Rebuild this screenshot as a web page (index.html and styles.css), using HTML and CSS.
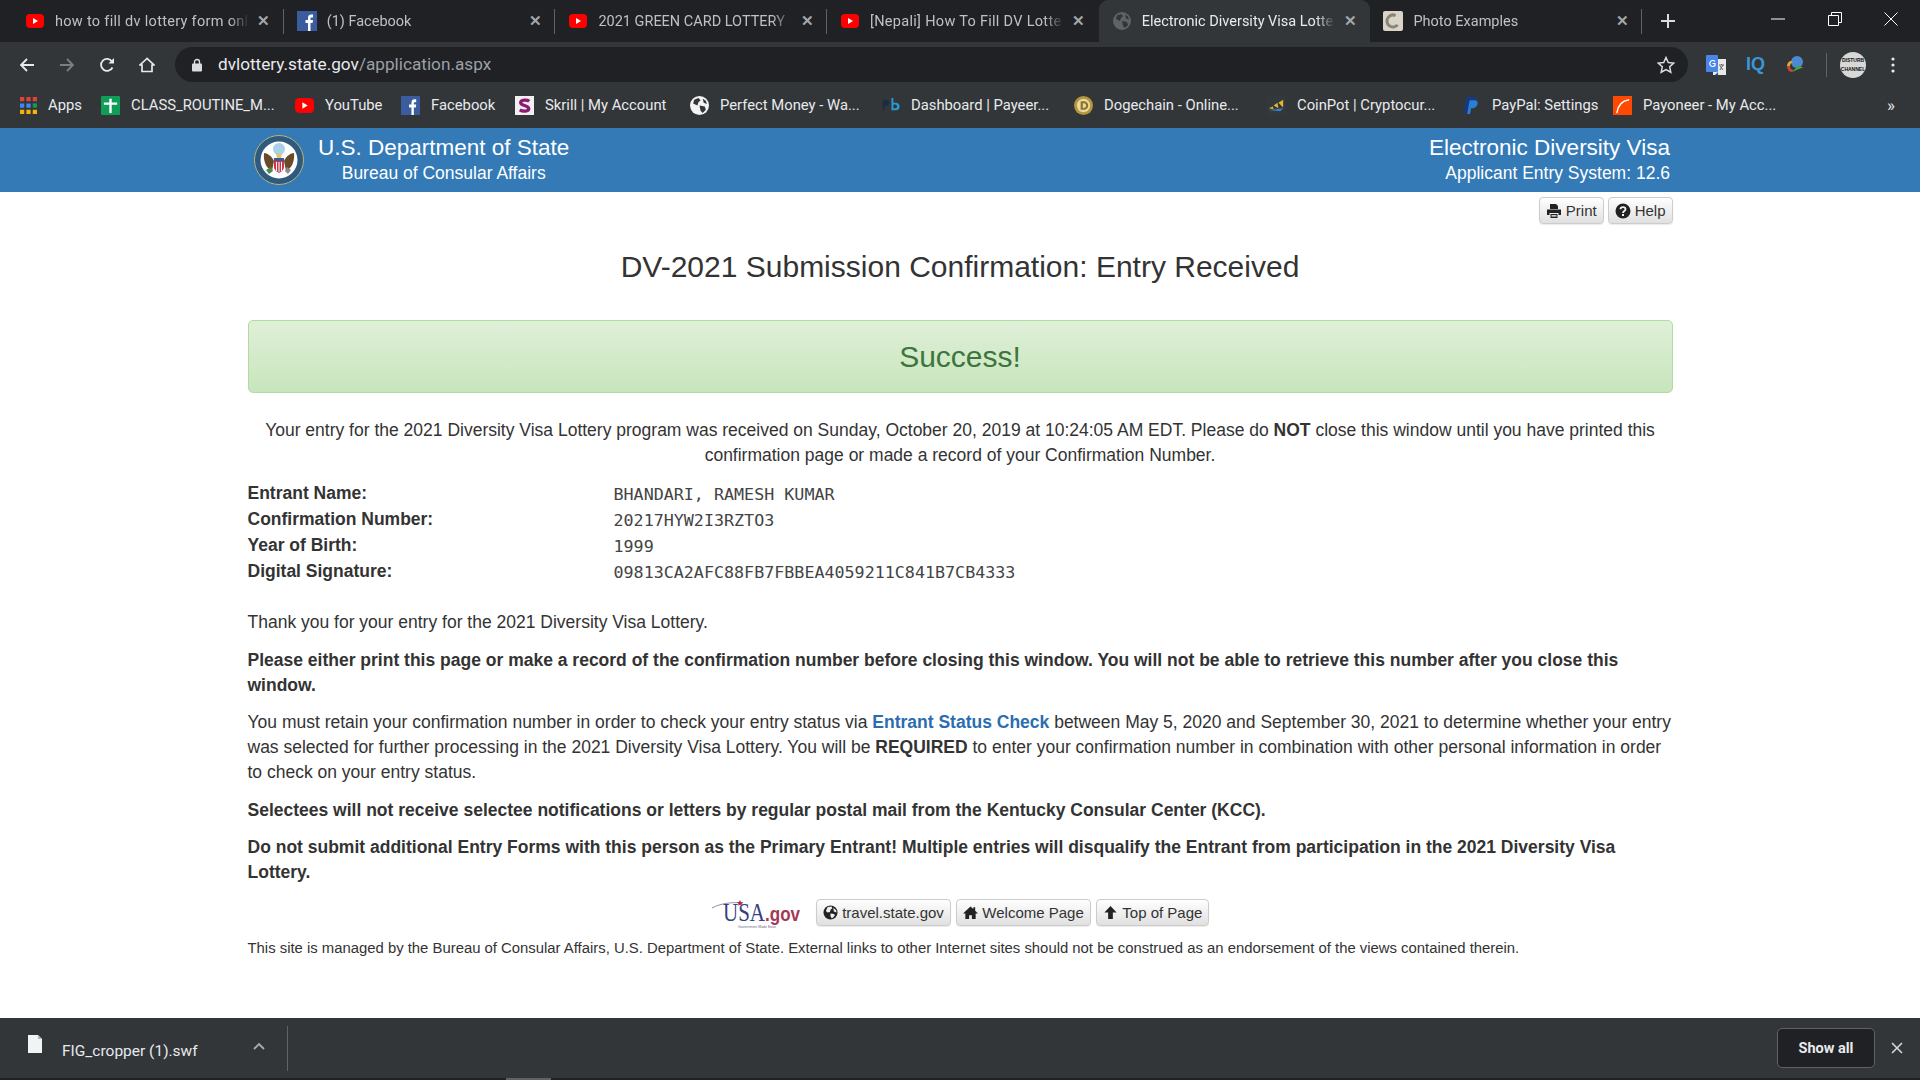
FILE: index.html
```html
<!DOCTYPE html>
<html lang="en">
<head>
    <meta charset="UTF-8">
    <meta name="viewport" content="width=device-width, initial-scale=1.0">
    <title>Electronic Diversity Visa Lottery</title>
    <link rel="stylesheet" href="styles.css">
</head>
<body>
    <svg class="sprites" width="0" height="0">
        <symbol id="yt" viewBox="0 0 18 18"><rect y="2" width="18" height="14" rx="4" fill="#f00"/><path d="M7 6l5 3-5 3z" fill="#fff"/></symbol>
        <symbol id="fb" viewBox="0 0 20 20"><rect width="20" height="20" fill="#3b5c9e"/><path d="M11 20v-8H8.500V9H11V6.800C11 4.500 12.400 3.500 14.300 3.500H16v3h-1.300c-.9 0-1.200.4-1.200 1.200V9H16l-.4 3h-2.100v8z" fill="#fff"/></symbol>
        <symbol id="globe" viewBox="0 0 18 18"><circle cx="9" cy="9" r="9"/><path d="M4 3.500l4-1.500 2 2-2 2-1 3-2-1-2-1zM9 9l5 1 1 3-3 3-2-2zM12 2.500l3 2 1 3-3-1z" fill="currentColor"/></symbol>
        <symbol id="glyph-globe" viewBox="0 0 16 16"><circle cx="8" cy="8" r="7.500" fill="#222"/><path d="M5 2l4-.5 1 2-2 1.500-.5 2.500-2.500.5-2-1.500zM8 9l4 .5.500 2-3 3-1.500-2.500zM11 3l3 2.500.5 2.500-3-1z" fill="#f0f0f0"/></symbol>
    </svg>

    <div class="tabstrip">
        <div class="tab">
            <svg class="favicon"><use href="#yt"/></svg>
            <span class="tab-title tight">how to fill dv lottery form onl</span>
            <span class="tab-close">&#x2715;</span>
        </div>
        <div class="tab">
            <svg class="favicon fav-big"><use href="#fb"/></svg>
            <span class="tab-title">(1) Facebook</span>
            <span class="tab-close">&#x2715;</span>
        </div>
        <div class="tab">
            <svg class="favicon"><use href="#yt"/></svg>
            <span class="tab-title">2021 GREEN CARD LOTTERY</span>
            <span class="tab-close">&#x2715;</span>
        </div>
        <div class="tab no-line">
            <svg class="favicon"><use href="#yt"/></svg>
            <span class="tab-title tight">[Nepali] How To Fill DV Lotte</span>
            <span class="tab-close">&#x2715;</span>
        </div>
        <div class="tab active">
            <svg class="favicon globe-dim"><use href="#globe"/></svg>
            <span class="tab-title">Electronic Diversity Visa Lotte</span>
            <span class="tab-close">&#x2715;</span>
        </div>
        <div class="tab">
            <svg class="favicon fav-big" viewBox="0 0 20 20"><rect width="20" height="20" rx="2" fill="#d9d4c8"/><circle cx="10" cy="10" r="6" fill="none" stroke="#8b8578" stroke-width="3" stroke-dasharray="26 12" transform="rotate(40 10 10)"/></svg>
            <span class="tab-title">Photo Examples</span>
            <span class="tab-close">&#x2715;</span>
        </div>
        <svg class="new-tab" viewBox="0 0 16 16"><path d="M8 1v14M1 8h14" stroke="#dadce0" stroke-width="2"/></svg>
        <div class="window-btns">
            <svg viewBox="0 0 14 14"><path d="M0 7h14" stroke="#fff" stroke-width="1"/></svg>
            <svg viewBox="0 0 14 14"><path d="M.5 3.500h10v10H.5zM3.500 3.500v-3h10v10h-3" fill="none" stroke="#fff"/></svg>
            <svg viewBox="0 0 14 14"><path d="M.5.500l13 13M13.500.500l-13 13" stroke="#fff"/></svg>
        </div>
    </div>

    <div class="toolbar">
        <svg class="nav-icon" viewBox="0 0 16 16"><path d="M15 8H2M8 2L2 8l6 6" fill="none" stroke="#e8eaed" stroke-width="1.800"/></svg>
        <svg class="nav-icon" viewBox="0 0 16 16"><path d="M1 8h13M8 2l6 6-6 6" fill="none" stroke="#7b7e82" stroke-width="1.800"/></svg>
        <svg class="nav-icon" viewBox="0 0 16 16"><path d="M13.500 10.500A6 6 0 1 1 13 4.500" fill="none" stroke="#e8eaed" stroke-width="1.800"/><path d="M15 1v5.500H9.500z" fill="#e8eaed"/></svg>
        <svg class="nav-icon" viewBox="0 0 16 16"><path d="M8 1.500L1 8h2v6.500h10V8h2zM3 8" fill="none" stroke="#e8eaed" stroke-width="1.700"/></svg>
        <div class="omnibox">
            <svg class="lock" viewBox="0 0 10 14"><path d="M2.500 6V4a2.500 2.500 0 0 1 5 0v2" fill="none" stroke="#dadce0" stroke-width="1.400"/><rect y="5.500" width="10" height="8" rx="1" fill="#dadce0"/></svg>
            <span class="url"><span class="url-host">dvlottery.state.gov</span>/application.aspx</span>
            <svg class="star" viewBox="0 0 18 18"><path d="M9 1.500l2.300 5 5.400.6-4 3.700 1.100 5.400L9 13.500l-4.800 2.700 1.100-5.400-4-3.700 5.400-.6z" fill="none" stroke="#dadce0" stroke-width="1.500"/></svg>
        </div>
        <div class="extensions">
            <svg class="ext" viewBox="0 0 20 20"><rect x="7" y="4" width="13" height="16" fill="#e8e8e8"/><rect width="12" height="17" rx="1" fill="#4a86e8"/><path d="M12 17l-3 3h3z" fill="#2a56a8"/><path d="M9 6.500A3 3 0 1 0 9 10.500V8.500H6.500" fill="none" stroke="#fff" stroke-width="1.200"/><path d="M13 10h5M15.500 9v1M14 15l3-5M14 11l3 4" stroke="#666" stroke-width="1"/></svg>
            <span class="ext-iq">IQ</span>
            <svg class="ext" viewBox="0 0 20 20"><circle cx="11" cy="7" r="6" fill="#4a8ad4"/><path d="M1 11c0-3 2-5 4-5l2 1c-2 1-3 2-3 4z" fill="#e5a62b"/><path d="M1 11c0 3 2 6 5 6l2-2c-2 0-4-1-4-4z" fill="#d0452b"/><path d="M6 17l12-5-4 0-2-2-4 5z" fill="#45a536"/></svg>
            <span class="ext-line"></span>
            <span class="avatar"><span>DISTURB<br>CHANNEL</span></span>
            <svg class="menu-dots" viewBox="0 0 4 16"><circle cx="2" cy="2" r="1.600"/><circle cx="2" cy="8" r="1.600"/><circle cx="2" cy="14" r="1.600"/></svg>
        </div>
    </div>

    <div class="bookmarks">
        <div class="bm"><svg class="bm-ico apps" viewBox="0 0 16 16"><path fill="#db4437" d="M0 0h4v4H0zM6 0h4v4H6zM12 0h4v4h-4z"/><path fill="#4285f4" d="M0 6h4v4H0zM6 6h4v4H6z"/><path fill="#0f9d58" d="M12 6h4v4h-4z"/><path fill="#f4b400" d="M0 12h4v4H0zM6 12h4v4H6zM12 12h4v4h-4z"/></svg>Apps</div>
        <div class="bm"><svg class="bm-ico" viewBox="0 0 20 20"><rect width="20" height="20" rx="1" fill="#0f9d58"/><path d="M10 3v15M3 8h14" stroke="#fff" stroke-width="2.500"/></svg>CLASS_ROUTINE_M...</div>
        <div class="bm"><svg class="bm-ico"><use href="#yt"/></svg>YouTube</div>
        <div class="bm"><svg class="bm-ico"><use href="#fb"/></svg>Facebook</div>
        <div class="bm"><svg class="bm-ico" viewBox="0 0 20 20"><rect width="20" height="20" fill="#f3eef3"/><path d="M15 5.500C13 4 6 3.500 6 7c0 3.500 8.500 2.500 8.500 6.500 0 3-6.500 3-9.500 1" fill="none" stroke="#8b1a72" stroke-width="3.500"/></svg>Skrill | My Account</div>
        <div class="bm"><svg class="bm-ico globe-bright"><use href="#globe"/></svg>Perfect Money - Wa...</div>
        <div class="bm"><svg class="bm-ico" viewBox="0 0 20 20"><path d="M2 4h3.500a2.500 2.500 0 0 1 0 6H3.500v5H2z" fill="#1e2a44"/><path d="M11 2h2v5h2.500a4 4 0 0 1 0 8H11zM13 9v4h2a2 2 0 0 0 0-4z" fill="#2a9ad6"/></svg>Dashboard | Payeer...</div>
        <div class="bm"><svg class="bm-ico" viewBox="0 0 20 20"><circle cx="10" cy="10" r="10" fill="#b5963c"/><circle cx="10" cy="10" r="7" fill="#e8d9a0"/><path d="M7 5.500h3.500a4.500 4.500 0 0 1 0 9H7zM9.300 7.500v5h1a2.500 2.500 0 0 0 0-5z" fill="#8c7230"/></svg>Dogechain - Online...</div>
        <div class="bm"><svg class="bm-ico" viewBox="0 0 20 20"><rect width="20" height="20" fill="#33383d"/><path d="M2 13l4-2 1 3zM7 10l4-3 1 6zM12 7l5-3v8z" fill="#e4b52d"/><path d="M2 15l15-2-3 3z" fill="#3a7fc0"/></svg>CoinPot | Cryptocur...</div>
        <div class="bm"><svg class="bm-ico" viewBox="0 0 20 20"><path d="M5 1h6c4 0 5 2.500 4 5.500S11 10 9 10H7.500L6 18H2z" fill="#123a86"/><path d="M8 4.500h5c3 0 4 2 3.300 4.500S13 13 11 13H9.500L8.500 19H5.500z" fill="#2b7fd0"/></svg>PayPal: Settings</div>
        <div class="bm"><svg class="bm-ico" viewBox="0 0 20 20"><rect width="20" height="20" fill="#ff4800"/><path d="M4 18C5 10 10 5 17 4" fill="none" stroke="#fff" stroke-width="1.500"/></svg>Payoneer - My Acc...</div>
        <span class="bm-more">&raquo;</span>
    </div>

    <header class="site-header">
        <div class="header-inner">
            <div class="brand">
                <svg class="seal" viewBox="0 0 50 50">
                    <circle cx="25" cy="25" r="24.500" fill="#2d5a7e" stroke="#b9b274" stroke-width="1"/>
                    <circle cx="25" cy="25" r="18.500" fill="#fff"/>
                    <circle cx="25" cy="14" r="6" fill="#a9d0e6"/>
                    <path d="M10 18c3 0 8 3 10 8l-2 10c-5-2-9-9-8-18zM40 18c-3 0-8 3-10 8l2 10c5-2 9-9 8-18z" fill="#6b4a2a"/>
                    <path d="M20 23h10v9c0 3-3 5-5 6-2-1-5-3-5-6z" fill="#c9384a"/>
                    <path d="M20 23h10v3H20z" fill="#3a5a9a"/>
                    <path d="M22.500 27v9M25 27v10M27.500 27v9" stroke="#fff" stroke-width="1"/>
                    <path d="M22 19h6l-1 4h-4z" fill="#e3c766"/>
                    <path d="M12 35l5-3 2 4-4 3z" fill="#4e8a4e"/>
                    <path d="M33 32l4 3-3 4-3-3z" fill="#8c8c8c"/>
                </svg>
                <div class="brand-text">
                    <div class="header-big">U.S. Department of State</div>
                    <div class="header-small">Bureau of Consular Affairs</div>
                </div>
            </div>
            <div class="system-text">
                <div class="header-big">Electronic Diversity Visa</div>
                <div class="header-small">Applicant Entry System: 12.6</div>
            </div>
        </div>
    </header>

    <main class="page">
        <div class="top-buttons">
            <a class="btn">
                <svg class="glyph" viewBox="0 0 16 16"><path fill="#222" d="M4 1h6l2 2v3H4zM1 6.500h14V12h-2.500v-2h-9v2H1zM4.500 11h7v4h-7z"/><path fill="#fff" d="M5.500 12h5v.8h-5zM5.500 13.500h5v.6h-5z"/></svg>Print
            </a>
            <a class="btn">
                <svg class="glyph" viewBox="0 0 16 16"><circle cx="8" cy="8" r="7.500" fill="#222"/><path d="M5.500 6.200C5.500 3.500 10.500 3.500 10.500 6.200 10.500 8 8 8 8 10" fill="none" stroke="#f2f2f2" stroke-width="1.800"/><rect x="7" y="11" width="2" height="2" fill="#f2f2f2"/></svg>Help
            </a>
        </div>

        <h2 class="page-title">DV-2021 Submission Confirmation: Entry Received</h2>

        <div class="alert-success"><h3>Success!</h3></div>

        <p class="center-text">Your entry for the 2021 Diversity Visa Lottery program was received on Sunday, October 20, 2019 at 10:24:05 AM EDT. Please do <strong>NOT</strong> close this window until you have printed this confirmation page or made a record of your Confirmation Number.</p>

        <div class="entry-table">
            <div class="entry-label">Entrant Name:</div>
            <div class="entry-value">BHANDARI, RAMESH KUMAR</div>
            <div class="entry-label">Confirmation Number:</div>
            <div class="entry-value">20217HYW2I3RZTO3</div>
            <div class="entry-label">Year of Birth:</div>
            <div class="entry-value">1999</div>
            <div class="entry-label">Digital Signature:</div>
            <div class="entry-value">09813CA2AFC88FB7FBBEA4059211C841B7CB4333</div>
        </div>

        <p>Thank you for your entry for the 2021 Diversity Visa Lottery.</p>
        <p><strong>Please either print this page or make a record of the confirmation number before closing this window. You will not be able to retrieve this number after you close this window.</strong></p>
        <p>You must retain your confirmation number in order to check your entry status via <a class="text-link">Entrant Status Check</a> between May 5, 2020 and September 30, 2021 to determine whether your entry was selected for further processing in the 2021 Diversity Visa Lottery. You will be <strong>REQUIRED</strong> to enter your confirmation number in combination with other personal information in order to check on your entry status.</p>
        <p><strong>Selectees will not receive selectee notifications or letters by regular postal mail from the Kentucky Consular Center (KCC).</strong></p>
        <p><strong>Do not submit additional Entry Forms with this person as the Primary Entrant! Multiple entries will disqualify the Entrant from participation in the 2021 Diversity Visa Lottery.</strong></p>

        <div class="footer-links">
            <svg class="usa-logo" viewBox="0 0 100 30">
                <path d="M1 10C10 5 22 4 32 5" fill="none" stroke="#8a8fb0" stroke-width="1"/>
                <path d="M29 2l1 2 2 .3-1.500 1.500.4 2-1.900-1-1.900 1 .4-2L26 4.300l2-.3z" fill="#b8283c"/>
                <text x="12" y="23" class="usa-text" textLength="42" lengthAdjust="spacingAndGlyphs">USA</text>
                <text x="54" y="23" class="gov-text" textLength="35" lengthAdjust="spacingAndGlyphs">.gov</text>
                <text x="27" y="29.500" class="usa-tiny">Government Made Easy</text>
            </svg>
            <a class="btn"><svg class="glyph"><use href="#glyph-globe"/></svg>travel.state.gov</a>
            <a class="btn"><svg class="glyph" viewBox="0 0 16 16"><path fill="#222" d="M8 1.500L0 9h2.500v6H6.500v-4h3v4h4V9H16l-3-2.800V2.500h-2v1.800z"/></svg>Welcome Page</a>
            <a class="btn"><svg class="glyph" viewBox="0 0 16 16"><path fill="#222" d="M8 1l6.500 7H10.500v7h-5V8H1.500z"/></svg>Top of Page</a>
        </div>

        <p class="disclaimer">This site is managed by the Bureau of Consular Affairs, U.S. Department of State. External links to other Internet sites should not be construed as an endorsement of the views contained therein.</p>
    </main>

    <div class="download-bar">
        <div class="download-item">
            <svg class="file-icon" viewBox="0 0 14 18"><path d="M0 0h10l4 4v14H0z" fill="#f1f3f4"/><path d="M10 0v4h4z" fill="#b0b3b6"/></svg>
            <span class="file-name">FIG_cropper (1).swf</span>
            <svg class="chevron" viewBox="0 0 12 8"><path d="M1 7l5-5 5 5" fill="none" stroke="#a8abae" stroke-width="1.800"/></svg>
        </div>
        <button class="show-all">Show all</button>
        <svg class="bar-close" viewBox="0 0 12 12"><path d="M1 1l10 10M11 1L1 11" stroke="#dadce0" stroke-width="1.500"/></svg>
    </div>
    <div class="bottom-strip"><span class="strip-thumb"></span></div>
</body>
</html>
```

FILE: styles.css
```css
* {
    box-sizing: border-box;
}
html, body {
    height: 100%;
}
body {
    margin: 0;
    display: flex;
    flex-direction: column;
    height: 1080px;
    overflow: hidden;
    font-family: "Liberation Sans", Arial, sans-serif;
    font-size: 17.5px;
    line-height: 25px;
    color: #333;
    background: #fff;
}
.sprites {
    position: absolute;
}

/* browser chrome */
.tabstrip {
    display: flex;
    align-items: center;
    height: 42px;
    padding-left: 12px;
    background: #202124;
    font-family: Roboto, sans-serif;
    font-size: 14.5px;
    color: #bdc1c6;
}
.tab {
    display: flex;
    align-items: center;
    width: 271.7px;
    height: 42px;
    padding: 0 13px 0 14px;
    position: relative;
}
.tab::after {
    content: "";
    position: absolute;
    right: 0;
    top: 9px;
    height: 25px;
    width: 1px;
    background: #5f6368;
}
.tab.no-line::after, .tab.active::after {
    display: none;
}
.tab.active {
    background: #323639;
    border-radius: 9px 9px 0 0;
    color: #e8eaed;
}
.favicon {
    width: 18px;
    height: 18px;
    flex: none;
    margin-right: 11px;
}
.fav-big {
    width: 20px;
    height: 20px;
    margin-left: -1px;
    margin-right: 10px;
}
.globe-dim {
    color: #323639;
    fill: #5f6368;
}
.tab-title {
    flex: 1;
    min-width: 0;
    white-space: nowrap;
    -webkit-mask-image: linear-gradient(to right, #000 90%, transparent 100%);
    mask-image: linear-gradient(to right, #000 90%, transparent 100%);
}
.tight {
    letter-spacing: 0.3px;
}
.tab-close {
    width: 14px;
    margin-left: 8px;
    font-size: 15px;
    font-weight: bold;
    text-align: center;
    color: #a4a7ab;
}
.new-tab {
    width: 16px;
    height: 16px;
    margin-left: 18px;
}
.window-btns {
    margin-left: auto;
    display: flex;
    height: 42px;
    padding-right: 22px;
    gap: 42.5px;
    align-items: flex-start;
    padding-top: 12px;
}
.window-btns svg {
    width: 14px;
    height: 14px;
}

.toolbar {
    display: flex;
    align-items: center;
    height: 46px;
    padding: 0 0 1px 19px;
    background: #323639;
}
.nav-icon {
    width: 16px;
    height: 16px;
    margin-right: 24px;
    flex: none;
}
.omnibox {
    display: flex;
    align-items: center;
    width: 1513px;
    height: 35px;
    margin-left: -4px;
    padding: 0 13px 0 17px;
    border-radius: 18px;
    background: #202124;
    font-family: Roboto, sans-serif;
    font-size: 17.2px;
    color: #9aa0a6;
}
.lock {
    width: 10px;
    height: 14px;
    margin-right: 16px;
}
.url {
    flex: 1;
}
.url-host {
    color: #e8eaed;
}
.star {
    width: 18px;
    height: 18px;
}
.extensions {
    display: flex;
    align-items: center;
    margin-left: 18px;
}
.ext {
    width: 20px;
    height: 20px;
    margin-right: 20px;
}
.ext-iq {
    width: 20px;
    margin-right: 20px;
    font-family: "Liberation Sans", sans-serif;
    font-weight: bold;
    font-size: 18px;
    color: #3b97d3;
}
.ext-line {
    width: 1px;
    height: 24px;
    background: #5f6368;
    margin-right: 13px;
}
.avatar {
    display: flex;
    align-items: center;
    justify-content: center;
    width: 26px;
    height: 26px;
    border-radius: 50%;
    background: #d8d8d8;
    overflow: hidden;
    margin-right: 25px;
}
.avatar span {
    font-size: 5px;
    font-weight: bold;
    line-height: 9px;
    text-align: center;
    color: #111;
}
.menu-dots {
    width: 4px;
    height: 16px;
    fill: #e8eaed;
}

.bookmarks {
    display: grid;
    grid-template-columns: 81px 194px 106px 114px 175px 191px 193px 193px 195px 151px 1fr 30px;
    align-items: center;
    height: 40px;
    padding: 0 0 5px 20px;
    background: #323639;
    font-family: Roboto, sans-serif;
    font-size: 14.8px;
    color: #e8eaed;
    white-space: nowrap;
}
.bm {
    display: flex;
    align-items: center;
}
.bm:nth-child(11) {
    grid-column: 11;
}
.bm-ico {
    width: 19px;
    height: 19px;
    flex: none;
    margin-right: 11px;
}
.apps {
    width: 17px;
    height: 17px;
    margin-right: 11px;
}
.globe-bright {
    color: #323639;
    fill: #f1f3f4;
}
.bm-more {
    grid-column: 12;
    font-size: 17px;
    margin-left: -3px;
}

/* site header */
.site-header {
    height: 64px;
    flex: none;
    background: #337ab7;
    color: #fff;
}
.header-inner {
    display: flex;
    justify-content: space-between;
    align-items: center;
    width: 1424px;
    height: 64px;
    margin: 0 auto;
    padding: 0 2px 4px 6px;
}
.brand {
    display: flex;
    align-items: center;
    gap: 14px;
}
.seal {
    width: 50px;
    height: 50px;
    margin-top: 4px;
}
.brand-text {
    text-align: center;
}
.system-text {
    text-align: right;
}
.header-big {
    font-size: 22.500px;
    line-height: 30px;
}
.header-small {
    font-size: 17.500px;
    line-height: 20px;
}

/* page body */
.page {
    flex: 1;
    width: 1425px;
    margin: 0 auto;
}
.top-buttons {
    display: flex;
    justify-content: flex-end;
    gap: 4px;
    margin: 5px 0 0;
}
.btn {
    display: inline-flex;
    align-items: center;
    height: 27px;
    padding: 0 6px;
    border: 1px solid #ccc;
    border-radius: 4px;
    background: linear-gradient(to bottom, #fff, #e0e0e0);
    font-size: 15px;
    color: #333;
    box-shadow: 0 1px 1px rgba(0, 0, 0, 0.08);
}
.top-buttons .glyph {
    width: 16px;
    height: 16px;
}
.glyph {
    width: 15px;
    height: 15px;
    margin-right: 4px;
    flex: none;
}
.page-title {
    margin: 26px 0 0;
    font-size: 30px;
    font-weight: normal;
    line-height: 33px;
    text-align: center;
}
.alert-success {
    display: flex;
    align-items: center;
    justify-content: center;
    height: 73px;
    margin: 37px 0 25px;
    border: 1px solid #b2dba1;
    border-radius: 5px;
    background: linear-gradient(to bottom, #dff0d8, #c8e5bc);
}
.alert-success h3 {
    margin: 0;
    font-size: 30px;
    font-weight: normal;
    color: #3c763d;
}
p {
    margin: 0 0 12.500px;
}
.center-text {
    padding: 0 10px;
    text-align: center;
    margin-bottom: 13px;
}
.entry-table {
    display: grid;
    grid-template-columns: 366px 1fr;
    grid-auto-rows: 26px;
    margin-bottom: 25px;
}
.entry-label {
    font-weight: bold;
}
.entry-value {
    padding-top: 1px;
    font-family: "DejaVu Sans Mono", monospace;
    font-size: 16.700px;
    color: #444;
}
.text-link {
    font-weight: bold;
    color: #2a6db0;
}
.footer-links {
    display: flex;
    justify-content: center;
    align-items: center;
    gap: 5.500px;
    margin-top: 10px;
}
.usa-logo {
    width: 100px;
    height: 30px;
}
.usa-text {
    font-family: "Liberation Serif", serif;
    font-size: 26px;
    fill: #3a3f7f;
}
.gov-text {
    font-family: "Liberation Sans", sans-serif;
    font-size: 20px;
    font-weight: bold;
    fill: #a23a55;
}
.usa-tiny {
    font-size: 3.500px;
    fill: #6a6e90;
}
.disclaimer {
    margin: 10px 0 0;
    font-size: 14.860px;
    line-height: 20px;
}

/* download shelf */
.download-bar {
    display: flex;
    align-items: center;
    height: 60px;
    flex: none;
    background: #323639;
}
.download-item {
    display: flex;
    align-items: center;
    width: 288px;
    height: 45px;
    padding-left: 28px;
    border-right: 1px solid #5f6368;
    font-family: Roboto, sans-serif;
    font-size: 15.500px;
    color: #e8eaed;
}
.file-icon {
    width: 14px;
    height: 18px;
    margin: -8px 20px 0 0;
}
.file-name {
    width: 191px;
    padding-top: 7px;
    white-space: nowrap;
}
.chevron {
    width: 12px;
    height: 8px;
    margin-top: -4px;
}
.show-all {
    width: 98px;
    height: 40px;
    margin-left: auto;
    margin-right: 16px;
    border: 1px solid #5f6368;
    border-radius: 5px;
    background: #202124;
    font-family: Roboto, sans-serif;
    font-size: 14.500px;
    font-weight: bold;
    color: #e8eaed;
}
.bar-close {
    width: 12px;
    height: 12px;
    margin-right: 17px;
}
.bottom-strip {
    height: 2px;
    flex: none;
    background: #202124;
    padding-left: 506px;
}
.strip-thumb {
    display: block;
    width: 45px;
    height: 2px;
    background: #5f6368;
}
```
